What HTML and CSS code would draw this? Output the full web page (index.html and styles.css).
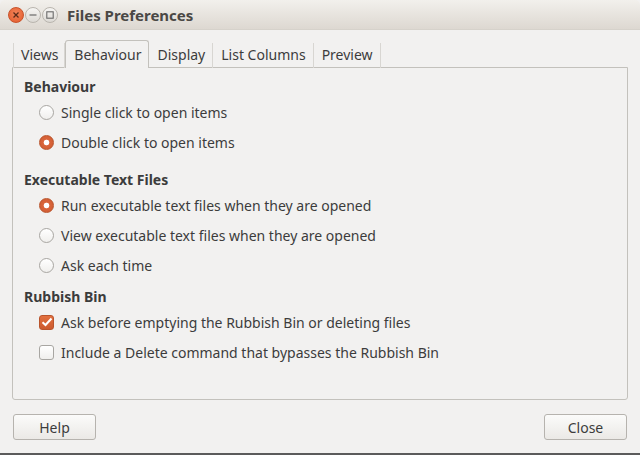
FILE: index.html
```html
<!DOCTYPE html>
<html lang="en">

<head>
    <meta charset="UTF-8">
    <meta name="viewport" content="width=device-width, initial-scale=1.0">
    <title>Files Preferences</title>
    <link rel="stylesheet" href="styles.css">
</head>

<body>
    <div class="window">
        <!-- 标题栏 -->
        <div class="titlebar">
            <div class="wm-buttons">
                <span class="wm-btn wm-close">
                    <svg width="8" height="8" viewBox="0 0 8 8"><path d="M1.5 1.5 L6.5 6.5 M6.5 1.5 L1.5 6.5" stroke="#5a2a18" stroke-width="1.3"/></svg>
                </span>
                <span class="wm-btn">
                    <svg width="8" height="8" viewBox="0 0 8 8"><path d="M0.5 4 H7.5" stroke="#6a6a6a" stroke-width="1.2"/></svg>
                </span>
                <span class="wm-btn">
                    <svg width="8" height="8" viewBox="0 0 8 8"><rect x="0.8" y="0.8" width="6.4" height="6.4" fill="none" stroke="#6a6a6a" stroke-width="1.1"/></svg>
                </span>
            </div>
            <div class="title">Files Preferences</div>
        </div>

        <div class="content">
            <!-- 选项卡 -->
            <div class="tabs">
                <div class="tab first">Views</div>
                <div class="tab active">Behaviour</div>
                <div class="tab">Display</div>
                <div class="tab">List Columns</div>
                <div class="tab">Preview</div>
            </div>

            <div class="notebook">
                <div class="group">
                    <div class="heading">Behaviour</div>
                    <div class="option"><span class="radio"></span>Single click to open items</div>
                    <div class="option"><span class="radio checked"></span>Double click to open items</div>
                </div>

                <div class="group second">
                    <div class="heading">Executable Text Files</div>
                    <div class="option"><span class="radio checked"></span>Run executable text files when they are opened</div>
                    <div class="option"><span class="radio"></span>View executable text files when they are opened</div>
                    <div class="option"><span class="radio"></span>Ask each time</div>
                </div>

                <div class="group third">
                    <div class="heading">Rubbish Bin</div>
                    <div class="option"><span class="check checked">
                        <svg width="12" height="10" viewBox="0 0 12 10"><path d="M1.5 5.2 L4.5 8 L10.5 1.5" fill="none" stroke="#fff" stroke-width="2"/></svg>
                    </span>Ask before emptying the Rubbish Bin or deleting files</div>
                    <div class="option"><span class="check"></span>Include a Delete command that bypasses the Rubbish Bin</div>
                </div>
            </div>

            <!-- 底部按钮 -->
            <div class="actions">
                <button class="btn">Help</button>
                <button class="btn">Close</button>
            </div>
        </div>
    </div>
</body>

</html>
```

FILE: styles.css
```css
* {
    margin: 0;
    padding: 0;
    box-sizing: border-box;
}

body {
    width: 640px;
    height: 455px;
    overflow: hidden;
    background-color: #f2f1f0;
    font-family: "Noto Sans", "Open Sans", sans-serif;
    font-size: 14px;
    color: #3c3c3c;
}

.window {
    width: 640px;
    height: 455px;
    display: flex;
    flex-direction: column;
    background-color: #f2f1f0;
    border-bottom: 2px solid #5b5b5b;
}

.titlebar {
    height: 30px;
    display: flex;
    align-items: center;
    background: linear-gradient(#f2f0ec, #ddd8d1);
    border-radius: 5px 5px 0 0;
    border-bottom: 1px solid #d6d2cb;
    padding-left: 8px;
}

.wm-buttons {
    display: flex;
    gap: 1px;
}

.wm-btn {
    width: 16px;
    height: 16px;
    border-radius: 50%;
    display: flex;
    align-items: center;
    justify-content: center;
    background: linear-gradient(#f6f5f3, #dcd9d4);
    border: 1px solid #b9b5ae;
}

.wm-close {
    background: radial-gradient(circle at 50% 40%, #f4845a, #e25a2a);
    border-color: #c8532b;
}

.title {
    margin-left: 9px;
    font-weight: bold;
    font-size: 15px;
    color: #4a4845;
}

.content {
    flex: 1;
    display: flex;
    flex-direction: column;
    padding: 10px 12px 0;
}

.tabs {
    display: flex;
    align-items: flex-end;
    height: 27px;
    padding-left: 1px;
}

.tab {
    height: 25px;
    padding: 0 7px 0 8px;
    line-height: 24px;
    border-right: 1px solid #d8d6d2;
    margin-bottom: -1px;
    position: relative;
}

.tab.first {
    border-left: 1px solid #d8d6d2;
    padding: 0 6px 0 7px;
}

.tab.active {
    height: 28px;
    line-height: 27px;
    background-color: #f2f1f0;
    border: 1px solid #c3c1bc;
    border-bottom: none;
    border-radius: 3px 3px 0 0;
    z-index: 1;
}

.notebook {
    height: 333px;
    border: 1px solid #c3c1bc;
    border-radius: 0 0 3px 3px;
    padding: 9px 11px 0;
}

.heading {
    font-weight: bold;
    height: 20px;
    line-height: 20px;
}

.option {
    height: 30px;
    display: flex;
    align-items: center;
    padding-left: 15px;
}

.group.second {
    margin-top: 13px;
}

.group.third {
    margin-top: 7px;
}

.radio {
    width: 15px;
    height: 15px;
    border-radius: 50%;
    border: 1px solid #a8a6a2;
    background: linear-gradient(#ffffff, #f0efed);
    margin-right: 7px;
    flex-shrink: 0;
}

.radio.checked {
    border-color: #b9542c;
    background: radial-gradient(circle, #ffffff 0, #ffffff 2.5px, #d9653b 3.2px, #cf5a30 100%);
}

.check {
    width: 15px;
    height: 15px;
    border-radius: 3px;
    border: 1px solid #a8a6a2;
    background: linear-gradient(#ffffff, #f0efed);
    margin-right: 7px;
    flex-shrink: 0;
    display: flex;
    align-items: center;
    justify-content: center;
}

.check.checked {
    border-color: #b9542c;
    background: linear-gradient(#e2703f, #cc5a2e);
}

.actions {
    display: flex;
    justify-content: space-between;
    margin-top: 14px;
    padding: 0 1px;
}

.btn {
    width: 83px;
    height: 26px;
    font-family: inherit;
    font-size: 14px;
    color: #3c3c3c;
    border: 1px solid #b6b3ae;
    border-radius: 3px;
    background: linear-gradient(#fbfbfa, #ebe9e6);
}
```
